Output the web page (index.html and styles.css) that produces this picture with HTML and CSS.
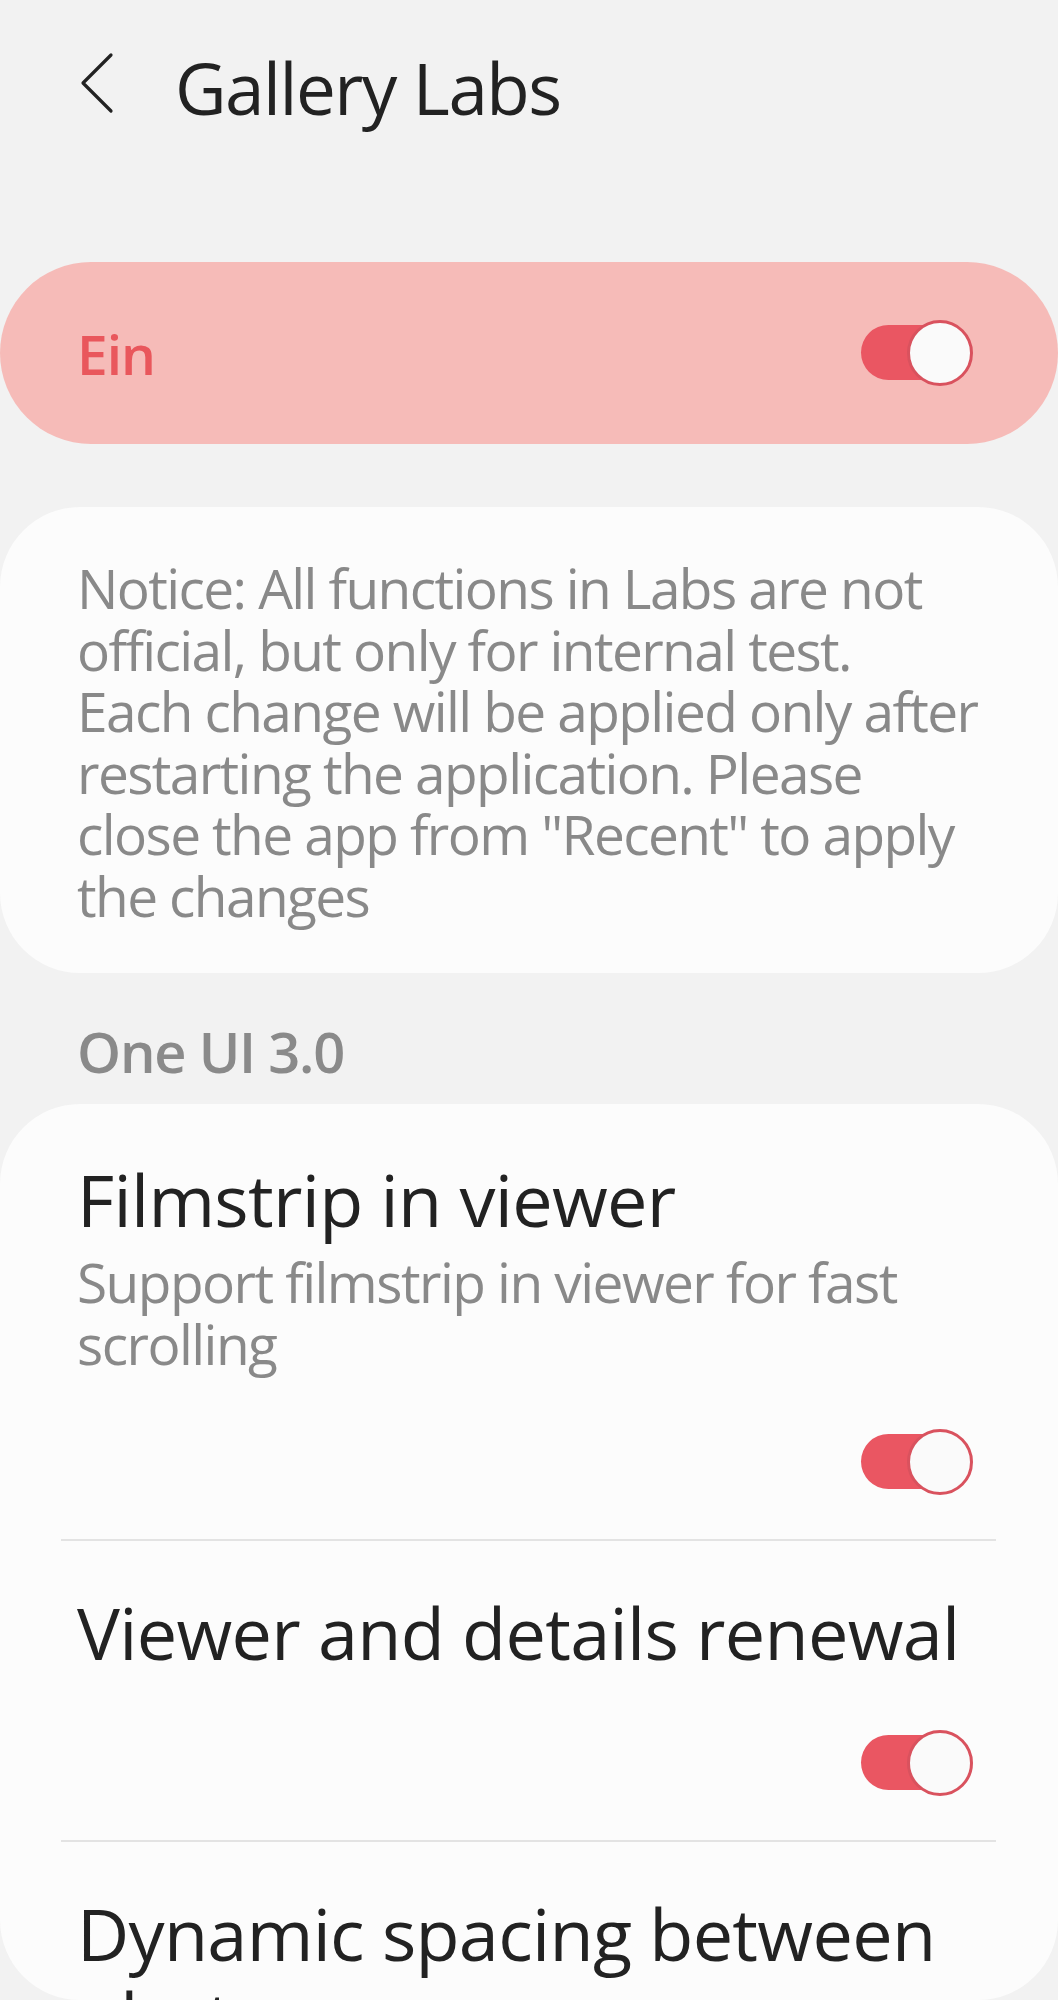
FILE: index.html
```html
<!DOCTYPE html>
<html lang="en">
<head>
    <meta charset="UTF-8">
    <title>Gallery Labs</title>
    <link rel="stylesheet" href="styles.css">
</head>
<body>
<header class="app-bar">
    <button class="back" aria-label="Back">
        <svg width="34" height="62" viewBox="0 0 34 62">
            <path d="M31 3 L3 31 L31 59" fill="none" stroke="#222" stroke-width="3.2" stroke-linecap="round" stroke-linejoin="round"/>
        </svg>
    </button>
    <h1>Gallery Labs</h1>
</header>

<div class="master-switch">
    <span>Ein</span>
    <span class="switch on"><span class="knob"></span></span>
</div>

<div class="notice">
    Notice: All functions in Labs are not<br>
    official, but only for internal test.<br>
    Each change will be applied only after<br>
    restarting the application. Please<br>
    close the app from "Recent" to apply<br>
    the changes
</div>

<h2 class="section-title">One UI 3.0</h2>

<div class="list">
    <div class="item first">
        <div class="item-title">Filmstrip in viewer</div>
        <div class="item-summary">Support filmstrip in viewer for fast<br>scrolling</div>
        <div class="switch-row"><span class="switch on"><span class="knob"></span></span></div>
    </div>
    <div class="divider"></div>
    <div class="item">
        <div class="item-title">Viewer and details renewal</div>
        <div class="switch-row"><span class="switch on"><span class="knob"></span></span></div>
    </div>
    <div class="divider"></div>
    <div class="item">
        <div class="item-title">Dynamic spacing between photos</div>
    </div>
</div>
</body>
</html>
```

FILE: styles.css
```css
html, body {
    margin: 0;
    height: 2000px;
    overflow: hidden;
}
body {
    background: #f2f2f2;
    font-family: "Open Sans", "Noto Sans", sans-serif;
    color: #222;
}
.app-bar {
    display: flex;
    align-items: center;
    padding: 48px 0 0 80px;
    height: 80px;
}
.back {
    border: 0;
    background: none;
    padding: 0;
    width: 34px;
    height: 62px;
    margin-top: -10px;
    display: block;
}
.app-bar h1 {
    margin: 0 0 0 61px;
    font-size: 71px;
    line-height: 80px;
    font-weight: 400;
    letter-spacing: -1.5px;
}
.master-switch {
    margin-top: 134px;
    height: 182px;
    border-radius: 91px;
    background: #f6bbb8;
    display: flex;
    align-items: center;
    justify-content: space-between;
    padding: 0 85px 0 77px;
    color: #e9575c;
    font-size: 55px;
    font-weight: 600;
    letter-spacing: -1px;
}
.switch {
    position: relative;
    display: block;
    width: 112px;
    height: 66px;
}
.switch::before {
    content: "";
    position: absolute;
    left: 0;
    top: 5px;
    width: 100px;
    height: 55px;
    border-radius: 28px;
    background: #ea5662;
}
.switch .knob {
    position: absolute;
    right: 0;
    top: 0;
    width: 60px;
    height: 60px;
    border-radius: 50%;
    border: 3px solid #d9525e;
    background: #fafafa;
}
.notice {
    margin-top: 63px;
    background: #fcfcfc;
    border-radius: 80px;
    padding: 50px 40px 47px 77px;
    font-size: 55px;
    line-height: 61.5px;
    color: #898989;
    white-space: nowrap;
    letter-spacing: -1.6px;
}
.section-title {
    margin: 46px 0 0 77px;
    font-size: 56px;
    line-height: 64px;
    font-weight: 600;
    color: #8a8a8a;
    letter-spacing: -1.2px;
}
.list {
    margin-top: 21px;
    height: 896px;
    background: #fcfcfc;
    border-radius: 80px;
    overflow: hidden;
}
.item {
    padding: 49px 77px 44px;
}
.item.first {
    padding-top: 53px;
}
.item-title {
    font-size: 72px;
    line-height: 84px;
    color: #222;
    letter-spacing: -0.7px;
}
.item-summary {
    margin-top: 10px;
    font-size: 55px;
    line-height: 61.5px;
    color: #898989;
    letter-spacing: -1.55px;
}
.switch-row {
    display: flex;
    justify-content: flex-end;
    margin-right: 8px;
}
.item-summary + .switch-row {
    margin-top: 55px;
}
.item-title + .switch-row {
    margin-top: 56px;
}
.divider {
    height: 2px;
    margin: 0 62px 0 61px;
    background: #e3e3e3;
}
```
